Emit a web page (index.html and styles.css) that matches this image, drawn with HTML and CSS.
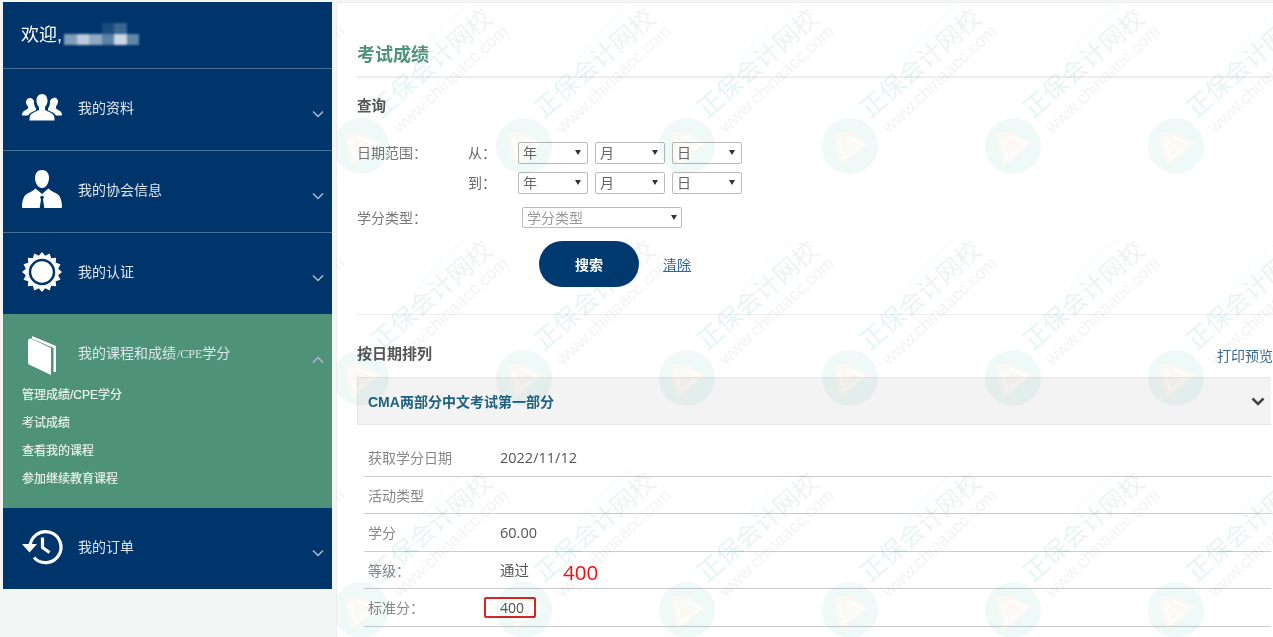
FILE: index.html
```html
<!DOCTYPE html>
<html lang="zh-CN">
<head>
    <meta charset="UTF-8">
    <title>考试成绩</title>
    <link rel="stylesheet" href="styles.css">
</head>
<body>
    <div class="page">
        <nav class="sidebar">
            <div class="welcome">欢迎,<span class="blur-name"><i></i><i></i><i></i><i></i><i></i><i></i><i></i><i></i></span></div>

            <div class="nav-item">
                <svg class="nav-icon" viewBox="0 0 40 30"><path d="M20 1c3.600 0 5.500 3 5.500 6.500 0 2.800-1 5-2.500 6.500v3c3 1.500 8 3 9 6 .5 1.500.5 3 .5 4.500H7.500c0-1.500 0-3 .5-4.500 1-3 6-4.500 9-6v-3c-1.500-1.500-2.500-3.700-2.500-6.500C14.500 4 16.400 1 20 1z"/><path d="M8 5c2 0 3.600 1.500 4 3.500-.2 2.500.6 5 2 7v1.800c-2.500 1.200-6.500 2.600-8 5.200H0c0-2 .5-3.500 2-4.500 1.500-1 3-1.800 4-2.500v-2C4.800 12.500 4 10.500 4 9c0-2.200 1.700-4 4-4z"/><path d="M32 5c-2 0-3.600 1.500-4 3.500.2 2.500-.6 5-2 7v1.800c2.500 1.200 6.500 2.600 8 5.200h6c0-2-.5-3.500-2-4.500-1.500-1-3-1.800-4-2.500v-2c1.200-1.500 2-3.500 2-5 0-2.200-1.700-4-4-4z"/></svg>
                <span class="nav-label">我的资料</span>
                <svg class="chevron" viewBox="0 0 12 8"><path d="M1 1.500l5 5 5-5"/></svg>
            </div>

            <div class="nav-item">
                <svg class="nav-icon" viewBox="0 0 40 40"><path d="M20 0c4.500 0 7 3.500 7 8 0 4-2.500 10-7 10s-7-6-7-10c0-4.500 2.500-8 7-8z"/><path d="M13.500 18.500L20 24l6.500-5.500c2.500 3 8 4.500 10 6.500 2 2 3.500 6.500 3.500 12 0 .5-.5 1-1 1H1c-.5 0-1-.5-1-1 0-5.500 1.500-10 3.500-12 2-2 7.500-3.500 10-6.500z"/><path class="icon-cut" d="M20 25.500l-2 1.500 1 2.500-1.500 9.500h5L21 29.500l1-2.500z"/></svg>
                <span class="nav-label">我的协会信息</span>
                <svg class="chevron" viewBox="0 0 12 8"><path d="M1 1.500l5 5 5-5"/></svg>
            </div>

            <div class="nav-item nav-item-flat">
                <svg class="nav-icon" viewBox="0 0 40 40">
                    <polygon points="40,20 36.180,23.220 38.480,27.650 33.720,29.170 34.140,34.140 29.170,33.720 27.650,38.480 23.220,36.180 20,40 16.780,36.180 12.350,38.480 10.830,33.720 5.860,34.140 6.280,29.170 1.520,27.650 3.820,23.220 0,20 3.820,16.780 1.520,12.350 6.280,10.830 5.860,5.860 10.830,6.280 12.350,1.520 16.780,3.820 20,0 23.220,3.820 27.650,1.520 29.170,6.280 34.140,5.860 33.720,10.830 38.480,12.350 36.180,16.780"/>
                    <circle class="ring" cx="20" cy="20" r="12"/>
                </svg>
                <span class="nav-label">我的认证</span>
                <svg class="chevron" viewBox="0 0 12 8"><path d="M1 1.500l5 5 5-5"/></svg>
            </div>

            <div class="nav-group">
                <div class="nav-item nav-item-open">
                    <svg class="nav-icon" viewBox="0 0 40 40"><path d="M6 7c0-2 2-3 4-2l19 9v27L8 31c-1.500-.7-2-1.500-2-3z"/><path d="M10 2l24 10v26h-2.500V14L10 4.500z"/></svg>
                    <span class="nav-label">我的课程和成绩<span class="label-latin">/CPE</span>学分</span>
                    <svg class="chevron" viewBox="0 0 12 8"><path d="M1 6.500l5-5 5 5"/></svg>
                </div>
                <ul class="sub-menu">
                    <li>管理成绩/CPE学分</li>
                    <li>考试成绩</li>
                    <li>查看我的课程</li>
                    <li>参加继续教育课程</li>
                </ul>
            </div>

            <div class="nav-item nav-item-last">
                <svg class="nav-icon" viewBox="0 0 40 36"><path class="clock-hand" d="M20.500 8.500v10l7 5"/><path class="clock-rim" d="M8 18A15.500 15.500 0 1 1 12 28.500"/><path d="M0 15h15l-7.500 8.500z"/></svg>
                <span class="nav-label">我的订单</span>
                <svg class="chevron" viewBox="0 0 12 8"><path d="M1 1.500l5 5 5-5"/></svg>
            </div>
        </nav>

        <main class="content">
            <h1 class="title">考试成绩</h1>
            <h2 class="sub-title">查询</h2>

            <div class="date-form">
                <span class="field-label">日期范围：</span>
                <span class="range-label">从：</span>
                <div class="date-selects">
                    <label class="select"><select><option>年</option></select></label>
                    <label class="select"><select><option>月</option></select></label>
                    <label class="select"><select><option>日</option></select></label>
                </div>
                <span></span>
                <span class="range-label">到：</span>
                <div class="date-selects">
                    <label class="select"><select><option>年</option></select></label>
                    <label class="select"><select><option>月</option></select></label>
                    <label class="select"><select><option>日</option></select></label>
                </div>
            </div>

            <div class="type-row">
                <span class="field-label">学分类型：</span>
                <label class="select select-wide"><select><option>学分类型</option></select></label>
            </div>

            <div class="actions">
                <button class="btn-search">搜索</button>
                <a class="link-clear" href="#">清除</a>
            </div>

            <div class="sort-row">
                <h2 class="sub-title">按日期排列</h2>
                <a class="link-print" href="#">打印预览</a>
            </div>

            <div class="accordion">
                <span>CMA两部分中文考试第一部分</span>
                <svg class="accordion-arrow" viewBox="0 0 14 9"><path d="M1.500 1.500L7 7l5.500-5.500"/></svg>
            </div>

            <div class="details">
                <div class="detail-row"><span class="detail-label">获取学分日期</span><span class="detail-value">2022/11/12</span></div>
                <div class="detail-row"><span class="detail-label">活动类型</span></div>
                <div class="detail-row"><span class="detail-label">学分</span><span class="detail-value">60.00</span></div>
                <div class="detail-row"><span class="detail-label">等级：</span><span class="detail-value">通过</span><span class="note-red">400</span></div>
                <div class="detail-row"><span class="detail-label">标准分：</span><span class="detail-value"><span class="red-box">400</span></span></div>
            </div>

            <!-- 水印 -->
            <svg class="watermark" width="937" height="637">
                <defs>
                    <linearGradient id="wm-name-fill">
                        <stop offset="0" stop-color="#e3f6f4"/>
                        <stop offset="1" stop-color="#f1f1f1"/>
                    </linearGradient>
                    <g id="wm">
                        <circle class="wm-circle" cx="24" cy="150" r="28"/>
                        <path class="wm-flag" d="M8 137c6-2 12-1 18 1l18 9-3 2-20 17-6 4c-4-9-7-21-7-33z"/>
                        <path class="wm-flag-line" d="M13 143l5 20 19-15-16-7"/>
                        <path class="wm-arc" d="M79 64Q100 30 132 9"/>
                        <text class="wm-name" fill="url(#wm-name-fill)" transform="translate(44 123) rotate(-41)">正保会计网校</text>
                        <text class="wm-url" transform="translate(63 138) rotate(-43)">www.chinaacc.com</text>
                    </g>
                    <pattern id="wm-tile" width="163" height="232" patternUnits="userSpaceOnUse" y="-7">
                        <use href="#wm"/>
                        <use href="#wm" x="-163"/>
                        <use href="#wm" x="163"/>
                    </pattern>
                </defs>
                <rect width="937" height="637" fill="url(#wm-tile)"/>
            </svg>
        </main>
    </div>
</body>
</html>
```
FILE: styles.css
```css
html, body {
    margin: 0;
    height: 637px;
    overflow: hidden;
}

body {
    background-color: #f4f5f5;
    font-family: "Liberation Sans", "Noto Sans CJK SC", sans-serif;
    color: #555;
    font-size: 14px;
}

.page {
    display: flex;
    height: 637px;
    padding: 2px 0 0 3px;
    box-sizing: border-box;
}

/* 左侧菜单 */
.sidebar {
    width: 329px;
    height: 587px;
    flex-shrink: 0;
    background-color: #00356b;
    color: #fff;
}

.welcome {
    height: 67px;
    box-sizing: border-box;
    padding: 20px 0 0 18px;
    font-size: 18px;
    line-height: 26px;
    display: flex;
    border-bottom: 1px solid #4a7299;
}

.blur-name {
    display: grid;
    grid-template-columns: repeat(6, 12.500px);
    grid-template-rows: 11px 11px;
    margin: 1px 0 0 2px;
    filter: blur(1px);
}

.blur-name i:nth-child(1) { grid-area: 2 / 1; background-color: #7f9dba; }
.blur-name i:nth-child(2) { grid-area: 2 / 2; background-color: #bccbda; }
.blur-name i:nth-child(3) { grid-area: 2 / 3; background-color: #8ea9c3; }
.blur-name i:nth-child(4) { grid-area: 2 / 4; background-color: #5a82a8; }
.blur-name i:nth-child(5) { grid-area: 2 / 5; background-color: #cbd7e2; }
.blur-name i:nth-child(6) { grid-area: 2 / 6; background-color: #5f85a9; }
.blur-name i:nth-child(7) { grid-area: 1 / 4; background-color: #1a4c7d; }
.blur-name i:nth-child(8) { grid-area: 1 / 5; background-color: #3a6690; }

.nav-item {
    height: 82px;
    box-sizing: border-box;
    display: flex;
    align-items: center;
    padding: 0 8px 0 19px;
    border-bottom: 1px solid #4a7299;
}

.nav-item-flat {
    height: 81px;
    border-bottom: none;
}

.nav-item-open {
    border-bottom: none;
    height: 79px;
}

.nav-item-last {
    border-bottom: none;
    height: 81px;
}

.nav-icon {
    width: 40px;
    height: 40px;
    fill: #fff;
    flex-shrink: 0;
    margin-bottom: 3px;
    overflow: visible;
}

.nav-item-open .nav-icon {
    margin-bottom: 0;
}

.icon-cut {
    fill: #00356b;
}

.ring {
    fill: #fff;
    stroke: #00356b;
    stroke-width: 2.500px;
}

.clock-hand, .clock-rim {
    fill: none;
    stroke: #fff;
    stroke-width: 3.200px;
}

.nav-label {
    flex: 1;
    margin: 0 0 6px 16px;
    font-size: 14px;
    color: #dfe7ee;
}

.nav-item-open .nav-label {
    margin-bottom: 4px;
}

.label-latin {
    margin-left: 1px;
    font-family: "Liberation Serif", serif;
    font-size: 12px;
}

.chevron {
    width: 12px;
    height: 8px;
    margin: 9px 0 0 0;
    fill: none;
    stroke: #a9bed2;
    stroke-width: 1.500px;
}

.nav-group {
    height: 194px;
    background-color: #4f927a;
}

.nav-item-open .chevron {
    margin-top: 12px;
}

.sub-menu {
    list-style: none;
    margin: -12px 0 0 0;
    padding: 0 0 0 19px;
    font-size: 12px;
    line-height: 28px;
    color: #f0f5f2;
    -webkit-text-stroke: 0.15px #f0f5f2;
}

/* 右侧内容 */
.content {
    flex: 1;
    margin-left: 4px;
    height: 635px;
    box-sizing: border-box;
    background-color: #fff;
    padding: 0 2px 0 20px;
    position: relative;
    overflow: hidden;
    border-top: 1px solid #eee;
    border-left: 1px solid #eee;
}

.title {
    margin: 0;
    padding-top: 36px;
    height: 37px;
    line-height: 32px;
    font-size: 18px;
    font-weight: bold;
    color: #4f927a;
    border-bottom: 2px solid #eee;
}

.sub-title {
    margin: 18px 0 0 0;
    font-size: 14.500px;
    line-height: 20px;
    font-weight: bold;
    color: #555;
}

.field-label {
    color: #777;
    margin-top: -2px;
}

.range-label {
    color: #666;
    margin-top: -2px;
}

.date-form {
    display: grid;
    grid-template-columns: 111px 50px auto;
    grid-auto-rows: 22px;
    row-gap: 8px;
    align-items: center;
    margin-top: 26px;
    justify-content: start;
}

.date-selects {
    display: flex;
    gap: 7px;
}

.select {
    display: block;
    width: 70px;
    height: 22px;
    position: relative;
}

.select::after {
    content: "";
    position: absolute;
    right: 7px;
    top: 8px;
    border-style: solid;
    border-width: 5px 3px 0 3px;
    border-color: #333 transparent transparent transparent;
}

.select select {
    appearance: none;
    width: 100%;
    height: 100%;
    padding: 0 0 0 4px;
    border: 1px solid #bbb;
    border-radius: 2px;
    background-color: #fff;
    font-family: inherit;
    font-size: 14px;
    color: #666;
}

.type-row {
    display: flex;
    align-items: center;
    margin-top: 13px;
    gap: 95px;
}

.select-wide {
    width: 160px;
    height: 21px;
}

.select-wide::after {
    right: 5px;
}

.select-wide select {
    color: #999;
}

.actions {
    display: flex;
    align-items: center;
    gap: 24px;
    margin: 13px 0 0 182px;
    padding-bottom: 27px;
}

.btn-search {
    width: 100px;
    height: 46px;
    border: none;
    border-radius: 23px;
    background-color: #003a70;
    color: #fff;
    font-family: inherit;
    font-size: 14px;
    font-weight: bold;
}

.link-clear {
    color: #2b6a9c;
    font-size: 14px;
}

.sort-row {
    display: flex;
    justify-content: space-between;
    align-items: flex-end;
    border-top: 1px solid #eee;
    margin-right: -2px;
    height: 50px;
}

.sort-row .sub-title {
    margin: 0 0 1px 0;
    font-size: 15px;
}

.link-print {
    color: #3c6b8f;
    text-decoration: none;
    font-size: 14px;
    white-space: nowrap;
}

.accordion {
    display: flex;
    align-items: center;
    justify-content: space-between;
    height: 48px;
    box-sizing: border-box;
    margin-top: 12px;
    padding: 0 6px 0 10px;
    background-color: #f3f3f3;
    border: 1px solid #e6e6e6;
    border-right: none;
    font-size: 14px;
    font-weight: bold;
    color: #1f6180;
}

.accordion-arrow {
    width: 14px;
    height: 9px;
    fill: none;
    stroke: #444;
    stroke-width: 2.500px;
}

.details {
    margin: 14px 0 0 7px;
}

.detail-row {
    display: flex;
    align-items: center;
    height: 37.500px;
    box-sizing: border-box;
    border-bottom: 1px solid #ccc;
    padding-left: 4px;
}

.detail-label {
    width: 132px;
    color: #888;
}

.detail-value {
    font-family: "Open Sans", "Noto Sans CJK SC", sans-serif;
    font-size: 14.500px;
    color: #555;
}

.note-red {
    margin: 4px 0 0 34px;
    font-family: "Open Sans", sans-serif;
    font-size: 20.500px;
    color: #f01010;
}

.red-box {
    display: inline-block;
    width: 52px;
    height: 21px;
    margin-left: -16px;
    padding-left: 4px;
    box-sizing: border-box;
    border: 2px solid #d92525;
    border-radius: 2px;
    text-align: center;
    font-size: 14px;
    line-height: 18px;
}

/* 水印层, 盖在内容上 */
.watermark {
    position: absolute;
    left: 0;
    top: 0;
    pointer-events: none;
    mix-blend-mode: multiply;
}

.wm-circle {
    fill: #eef9f8;
}

.wm-flag {
    fill: #faf9f4;
}

.wm-flag-line {
    fill: none;
    stroke: #fff;
    stroke-width: 2px;
}

.wm-arc {
    fill: none;
    stroke: #eef9f8;
}

.wm-name {
    font-family: "Noto Sans CJK SC", sans-serif;
    font-size: 25px;
}

.wm-url {
    font-family: "Liberation Sans", sans-serif;
    font-size: 17.500px;
    fill: #f3f3f3;
}
```
